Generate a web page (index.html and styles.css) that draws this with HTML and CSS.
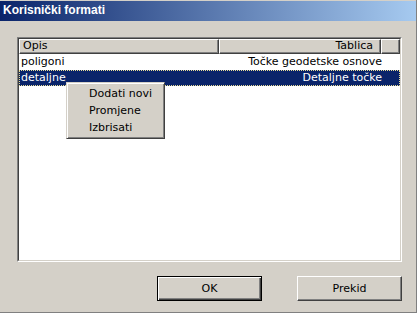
FILE: index.html
```html
<!DOCTYPE html>
<html lang="hr">
<head>
    <meta charset="UTF-8">
    <title>Korisnički formati</title>
    <link rel="stylesheet" href="styles.css">
</head>
<body>
    <div class="window">
        <div class="titlebar">Korisnički formati</div>

        <div class="listview">
            <div class="list-inner">
                <div class="header">
                    <div class="hcell col-opis">Opis</div>
                    <div class="hcell col-tablica">Tablica</div>
                    <div class="hcell col-fill"></div>
                </div>
                <div class="row">
                    <div class="cell col-opis">poligoni</div>
                    <div class="cell col-tablica">Točke geodetske osnove</div>
                </div>
                <div class="row selected">
                    <div class="cell col-opis">detaljne</div>
                    <div class="cell col-tablica">Detaljne točke</div>
                </div>
            </div>
        </div>

        <div class="buttons">
            <button class="btn default">OK</button>
            <button class="btn">Prekid</button>
        </div>

        <div class="context-menu">
            <div class="menu-item">Dodati novi</div>
            <div class="menu-item">Promjene</div>
            <div class="menu-item">Izbrisati</div>
        </div>
    </div>
</body>
</html>
```

FILE: styles.css
```css
body {
    margin: 0;
    font-family: "DejaVu Sans", Verdana, sans-serif;
    font-size: 11px;
    color: #000;
    background: #d4d0c8;
}
.window {
    position: relative;
    width: 416px;
    height: 312px;
    background: #d4d0c8;
    border-right: 1px solid #808080;
    border-bottom: 1px solid #808080;
    display: flex;
    flex-direction: column;
}
.titlebar {
    margin-top: 1px;
    height: 20px;
    line-height: 19px;
    padding-left: 3px;
    color: #fff;
    font-family: "Liberation Sans", Arial, sans-serif;
    font-weight: bold;
    font-size: 12px;
    background: linear-gradient(to right, #0a246a, #a6caf0);
}
.listview {
    margin: 16px 0 0 17px;
    width: 383px;
    height: 223px;
    border: 1px solid;
    border-color: #808080 #fff #fff #808080;
}
.list-inner {
    height: 221px;
    background: #fff;
    border: 1px solid;
    border-color: #404040 #d4d0c8 #d4d0c8 #404040;
}
.header {
    display: flex;
    height: 15px;
}
.hcell {
    box-sizing: border-box;
    background: #d4d0c8;
    border: 1px solid;
    border-color: #fff #404040 #404040 #fff;
    box-shadow: inset -1px -1px 0 #808080;
    line-height: 12px;
    padding: 0 5px 0 3px;
}
.col-opis {
    width: 200px;
}
.col-tablica {
    width: 162px;
    text-align: right;
}
.col-fill {
    flex: 1;
}
.header .col-tablica {
    padding-right: 7px;
}
.row {
    display: flex;
    height: 16px;
    line-height: 14px;
    box-sizing: border-box;
    border: 1px dotted transparent;
}
.cell {
    box-sizing: border-box;
    white-space: nowrap;
}
.row .col-opis {
    padding-left: 1px;
}
.row .col-tablica {
    padding-right: 0;
}
.row.selected {
    background: #0a246a;
    color: #fff;
    border-color: #e8dc96;
}
.buttons {
    display: flex;
    justify-content: flex-end;
    gap: 35px;
    margin-top: 14px;
    padding-right: 14px;
}
.btn {
    width: 105px;
    height: 25px;
    font-family: "DejaVu Sans", Verdana, sans-serif;
    font-size: 11px;
    color: #000;
    background: #d4d0c8;
    border: 1px solid;
    border-color: #fff #404040 #404040 #fff;
    box-shadow: inset -1px -1px 0 #808080;
    padding: 0;
}
.btn.default {
    border: 1px solid #000;
    box-shadow: inset 1px 1px 0 #fff, inset -1px -1px 0 #404040, inset -2px -2px 0 #808080;
}
.context-menu {
    position: absolute;
    left: 66px;
    top: 82px;
    width: 97px;
    padding: 2px 0;
    background: #d4d0c8;
    border: 1px solid;
    border-color: #d4d0c8 #404040 #404040 #d4d0c8;
    box-shadow: inset 1px 1px 0 #fff, inset -1px -1px 0 #808080;
}
.menu-item {
    height: 17px;
    line-height: 17px;
    padding-left: 22px;
}
```
